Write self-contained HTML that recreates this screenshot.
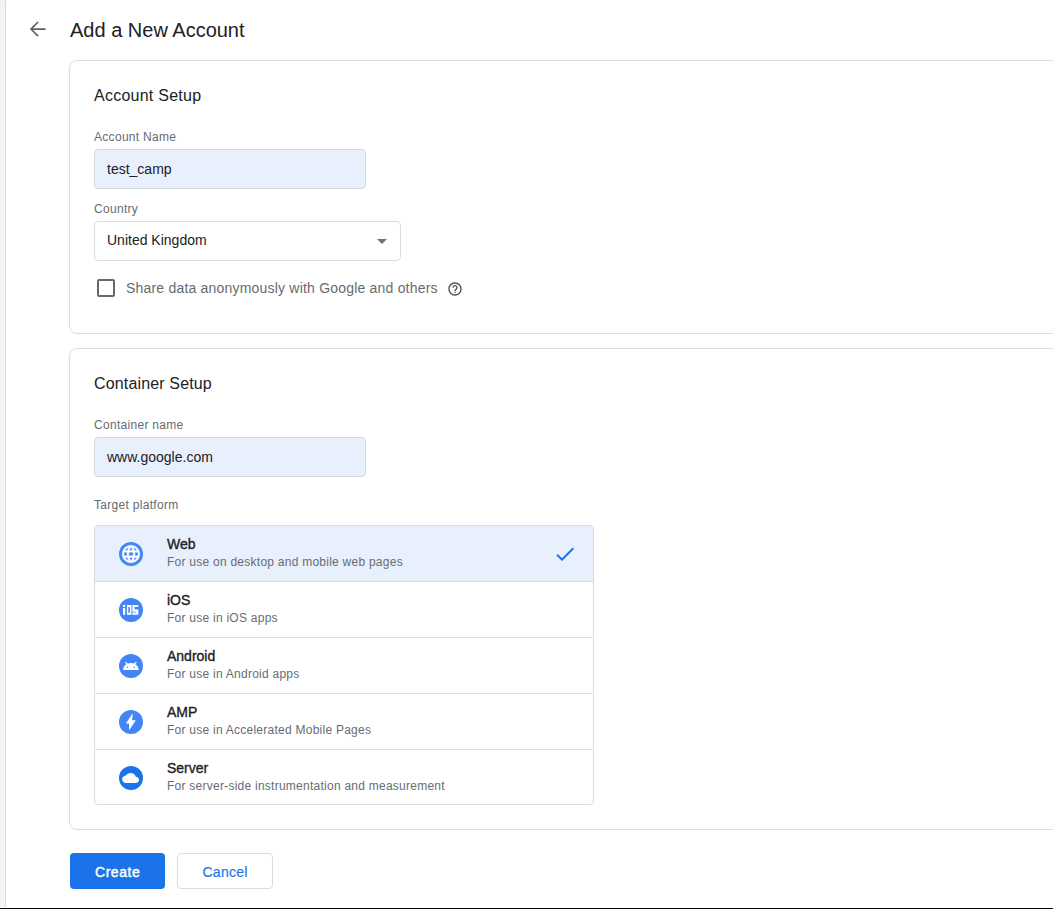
<!DOCTYPE html>
<html><head><meta charset="utf-8"><style>
html,body{margin:0;padding:0;width:1053px;height:909px;overflow:hidden;background:#ffffff;}
body{position:relative;font-family:"Liberation Sans",sans-serif;}
.a,.t,.card,.inp,.sel,.list{position:absolute;box-sizing:border-box;}
.t{white-space:nowrap;}
.strip{position:absolute;left:0;top:0;width:6px;height:907px;background:#f1f3f4;}
.panel{position:absolute;left:5px;top:-8px;width:1100px;height:915px;border-left:1px solid #dadce0;border-top:1px solid #dadce0;border-top-left-radius:12px;background:#fff;box-sizing:border-box;}
.bot{position:absolute;left:0;top:908px;width:1053px;height:1px;background:#080812;}
.card{left:69px;width:1100px;border:1px solid #dadce0;border-radius:8px;background:#fff;}
.inp{left:94px;height:40px;border:1px solid #d3d6da;border-radius:4px;background:#e8f0fe;}
.sel{left:94px;height:40px;border:1px solid #dadce0;border-radius:4px;background:#fff;}
.list{left:94px;top:525px;width:500px;height:280px;border:1px solid #dadce0;border-radius:4px;background:#fff;}
</style></head><body>
<div class="strip"></div>
<div class="panel"></div>
<div class="bot"></div>
<svg class="a" style="left:26px;top:17px" width="24" height="24" viewBox="0 0 24 24"><path fill="none" stroke="#5f6368" stroke-width="1.7" d="M19.6 12.1H5.2M12.1 5L5 12.1L12.1 19.2"/></svg>
<div class="t" style="left:70px;top:16px;font-size:20px;line-height:28px;color:#202124;font-weight:normal;letter-spacing:0px;">Add a New Account</div>
<div class="card" style="top:60px;height:274px"></div>
<div class="t" style="left:94px;top:85px;font-size:16px;line-height:22px;color:#202124;font-weight:normal;letter-spacing:0.25px;">Account Setup</div>
<div class="t" style="left:94px;top:129px;font-size:12px;line-height:17px;color:#676b70;font-weight:normal;letter-spacing:0.3px;">Account Name</div>
<div class="inp" style="top:149px;width:272px"></div>
<div class="t" style="left:107px;top:159px;font-size:14px;line-height:20px;color:#202124;font-weight:normal;letter-spacing:0px;">test_camp</div>
<div class="t" style="left:94px;top:201px;font-size:12px;line-height:17px;color:#676b70;font-weight:normal;letter-spacing:0.3px;">Country</div>
<div class="sel" style="top:221px;width:307px"></div>
<div class="t" style="left:107px;top:230px;font-size:14px;line-height:20px;color:#202124;font-weight:normal;letter-spacing:0px;">United Kingdom</div>
<div class="a" style="left:377px;top:239px;width:0;height:0;border-left:5px solid transparent;border-right:5px solid transparent;border-top:5px solid #6f7378"></div>
<div class="a" style="left:97px;top:279px;width:18px;height:18px;border:2px solid #676b70;border-radius:2px"></div>
<div class="t" style="left:126px;top:278px;font-size:14px;line-height:20px;color:#676b70;font-weight:normal;letter-spacing:0.2px;">Share data anonymously with Google and others</div>
<svg class="a" style="left:447px;top:281px" width="16" height="16" viewBox="0 0 24 24"><path fill="#4a4d51" d="M11 18h2v-2h-2v2zm1-16C6.48 2 2 6.48 2 12s4.48 10 10 10 10-4.48 10-10S17.520 2 12 2zm0 18c-4.41 0-8-3.59-8-8s3.590-8 8-8 8 3.59 8 8-3.59 8-8 8zm0-14c-2.21 0-4 1.79-4 4h2c0-1.1.9-2 2-2s2 .9 2 2c0 2-3 1.75-3 5h2c0-2.25 3-2.5 3-5 0-2.21-1.79-4-4-4z"/></svg>
<div class="card" style="top:348px;height:482px"></div>
<div class="t" style="left:94px;top:373px;font-size:16px;line-height:22px;color:#202124;font-weight:normal;letter-spacing:0.15px;">Container Setup</div>
<div class="t" style="left:94px;top:417px;font-size:12px;line-height:17px;color:#676b70;font-weight:normal;letter-spacing:0.3px;">Container name</div>
<div class="inp" style="top:437px;width:272px"></div>
<div class="t" style="left:107px;top:447px;font-size:14px;line-height:20px;color:#202124;font-weight:normal;letter-spacing:0px;">www.google.com</div>
<div class="t" style="left:94px;top:497px;font-size:12px;line-height:17px;color:#676b70;font-weight:normal;letter-spacing:0.3px;">Target platform</div>
<div class="list"></div>
<div class="a" style="left:95px;top:526px;width:498px;height:55px;background:#e8f0fe;border-radius:4px 4px 0 0"></div>
<div class="a" style="left:95px;top:581px;width:498px;height:1px;background:#dadce0"></div>
<div class="a" style="left:95px;top:637px;width:498px;height:1px;background:#dadce0"></div>
<div class="a" style="left:95px;top:693px;width:498px;height:1px;background:#dadce0"></div>
<div class="a" style="left:95px;top:749px;width:498px;height:1px;background:#dadce0"></div>
<svg class="a" style="left:119px;top:542px" width="24" height="24" viewBox="0 0 24 24"><circle cx="12" cy="12" r="12" fill="#4285f4"/><g transform="translate(1.44,1.44) scale(0.88)"><path fill="#fff" stroke="#fff" stroke-width="0.45" d="M11.99 2C6.47 2 2 6.48 2 12s4.470 10 9.990 10C17.52 22 22 17.52 22 12S17.52 2 11.99 2zm6.93 6h-2.95c-.32-1.25-.78-2.45-1.38-3.56 1.84.63 3.37 1.91 4.33 3.56zM12 4.040c.83 1.2 1.48 2.53 1.91 3.96h-3.82c.43-1.43 1.08-2.76 1.91-3.96zM4.26 14C4.1 13.36 4 12.69 4 12s.1-1.36.26-2h3.38c-.08.66-.14 1.32-.14 2 0 .68.06 1.34.14 2H4.26zm.82 2h2.95c.32 1.25.78 2.45 1.38 3.56-1.84-.63-3.37-1.9-4.33-3.56zm2.95-8H5.08c.96-1.66 2.49-2.93 4.33-3.56C8.81 5.55 8.35 6.75 8.030 8zM12 19.96c-.83-1.2-1.48-2.53-1.91-3.96h3.82c-.43 1.43-1.08 2.76-1.91 3.96zM14.34 14H9.66c-.09-.66-.16-1.32-.16-2 0-.68.07-1.35.16-2h4.68c.09.65.16 1.32.16 2 0 .68-.07 1.34-.16 2zm.25 5.56c.6-1.11 1.06-2.31 1.38-3.56h2.95c-.96 1.65-2.49 2.93-4.33 3.56zM16.36 14c.08-.66.14-1.320.14-2 0-.68-.06-1.34-.14-2h3.38c.16.64.26 1.31.26 2s-.1 1.36-.26 2h-3.38z"/></g></svg>
<div class="t" style="left:167px;top:534px;font-size:14px;line-height:20px;color:#202124;font-weight:normal;letter-spacing:0px;-webkit-text-stroke:0.35px #202124;">Web</div>
<div class="t" style="left:167px;top:554px;font-size:12px;line-height:17px;color:#686c71;font-weight:normal;letter-spacing:0.25px;">For use on desktop and mobile web pages</div>
<svg class="a" style="left:119px;top:598px" width="24" height="24" viewBox="0 0 24 24"><circle cx="12" cy="12" r="12" fill="#4285f4"/><g fill="#fff"><rect x="4" y="6.9" width="2.2" height="2.2"/><rect x="4" y="10" width="2.2" height="6.8"/><path fill-rule="evenodd" d="M7.9 6.9h4.6v9.9H7.9zM9.3 8.9v5.8h1.6V8.9z"/><path d="M13.4 6.9h5.9v2.2h-3.7v2.5h3.7v5.2h-5.9v-2.2h3.7v-0.9h-3.7z"/></g></svg>
<div class="t" style="left:167px;top:590px;font-size:14px;line-height:20px;color:#202124;font-weight:normal;letter-spacing:0px;-webkit-text-stroke:0.35px #202124;">iOS</div>
<div class="t" style="left:167px;top:610px;font-size:12px;line-height:17px;color:#686c71;font-weight:normal;letter-spacing:0.25px;">For use in iOS apps</div>
<svg class="a" style="left:119px;top:654px" width="24" height="24" viewBox="0 0 24 24"><circle cx="12" cy="12" r="12" fill="#4285f4"/><path fill="#fff" d="M4 15.9C4.3 12 7.5 9.1 11.85 9.1C16.2 9.1 19.4 12 19.7 15.9z"/><path stroke="#fff" stroke-width="1.2" stroke-linecap="round" d="M6.6 8.4l2.3 2.2M17.1 8.4l-2.3 2.2"/><circle cx="8.6" cy="13.3" r="0.75" fill="#4285f4"/><circle cx="15.1" cy="13.3" r="0.75" fill="#4285f4"/></svg>
<div class="t" style="left:167px;top:646px;font-size:14px;line-height:20px;color:#202124;font-weight:normal;letter-spacing:0px;-webkit-text-stroke:0.35px #202124;">Android</div>
<div class="t" style="left:167px;top:666px;font-size:12px;line-height:17px;color:#686c71;font-weight:normal;letter-spacing:0.25px;">For use in Android apps</div>
<svg class="a" style="left:119px;top:710px" width="24" height="24" viewBox="0 0 24 24"><circle cx="12" cy="12" r="12" fill="#4285f4"/><path fill="#fff" d="M13.3 3.7L6.9 13.4H10L10.2 20.2L16.8 10.2H13.1L13.7 3.8z"/></svg>
<div class="t" style="left:167px;top:702px;font-size:14px;line-height:20px;color:#202124;font-weight:normal;letter-spacing:0px;-webkit-text-stroke:0.35px #202124;">AMP</div>
<div class="t" style="left:167px;top:722px;font-size:12px;line-height:17px;color:#686c71;font-weight:normal;letter-spacing:0.25px;">For use in Accelerated Mobile Pages</div>
<svg class="a" style="left:119px;top:766px" width="24" height="24" viewBox="0 0 24 24"><circle cx="12" cy="12" r="12" fill="#1a73e8"/><g transform="translate(3.1,4.4) scale(0.708,0.625)"><path fill="#fff" d="M19.35 10.04C18.67 6.59 15.64 4 12 4 9.11 4 6.6 5.64 5.35 8.04 2.34 8.36 0 10.91 0 14c0 3.31 2.69 6 6 6h13c2.76 0 5-2.24 5-5 0-2.64-2.05-4.78-4.65-4.96z"/></g></svg>
<div class="t" style="left:167px;top:758px;font-size:14px;line-height:20px;color:#202124;font-weight:normal;letter-spacing:0px;-webkit-text-stroke:0.35px #202124;">Server</div>
<div class="t" style="left:167px;top:778px;font-size:12px;line-height:17px;color:#686c71;font-weight:normal;letter-spacing:0.25px;">For server-side instrumentation and measurement</div>
<svg class="a" style="left:552.6px;top:542.4px" width="24" height="24" viewBox="0 0 24 24"><path fill="#1a73e8" d="M9 16.17L4.83 12l-1.42 1.41L9 19 21 7l-1.41-1.41z"/></svg>
<div class="a" style="left:70px;top:853px;width:95px;height:36px;background:#1a73e8;border-radius:4px"></div>
<div class="t" style="left:95px;top:862px;font-size:14px;line-height:20px;color:#ffffff;font-weight:normal;letter-spacing:0.55px;-webkit-text-stroke:0.45px #fff;">Create</div>
<div class="a" style="left:177px;top:853px;width:96px;height:36px;border:1px solid #dadce0;border-radius:4px"></div>
<div class="t" style="left:202.5px;top:862px;font-size:14px;line-height:20px;color:#1a73e8;font-weight:normal;letter-spacing:0.25px;-webkit-text-stroke:0.15px #1a73e8;">Cancel</div>
</body></html>
